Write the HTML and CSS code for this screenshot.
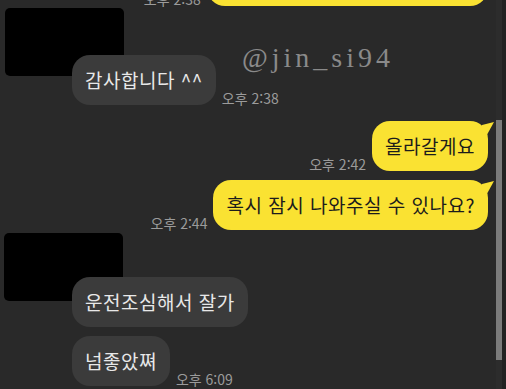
FILE: index.html
```html
<!DOCTYPE html>
<html lang="ko">
<head>
<meta charset="utf-8">
<link rel="stylesheet" href="styles.css">
</head>
<body>
<div class="screen">
  <div class="chat">
    <div class="msg sent first">
      <span class="time">오후 2:38</span>
      <div class="bubble yellow">네네 알겠습니다 감사합니다 ^^</div>
    </div>

    <div class="group g1">
      <div class="name"></div>
      <div class="redact"></div>
      <div class="msg recv">
        <div class="bubble gray">감사합니다 ^^</div>
        <span class="time">오후 2:38</span>
      </div>
    </div>

    <div class="msg sent s2">
      <span class="time">오후 2:42</span>
      <div class="bubble yellow">올라갈게요</div>
    </div>

    <div class="msg sent s3">
      <span class="time">오후 2:44</span>
      <div class="bubble yellow">혹시 잠시 나와주실 수 있나요?</div>
    </div>

    <div class="group g2">
      <div class="name"></div>
      <div class="redact"></div>
      <div class="msg recv">
        <div class="bubble gray">운전조심해서 잘가</div>
      </div>
      <div class="msg recv r2">
        <div class="bubble gray">넘좋았쪄</div>
        <span class="time">오후 6:09</span>
      </div>
    </div>
  </div>
  <div class="track"><div class="thumb"></div></div>
  <div class="watermark">@jin_si94</div>
</div>
</body>
</html>
```

FILE: styles.css
```css
html, body {
  margin: 0;
  padding: 0;
  background: #292929;
}
body {
  width: 506px;
  height: 389px;
  overflow: hidden;
  font-family: "Noto Sans CJK KR", "Noto Sans", sans-serif;
}
.screen {
  position: relative;
  display: flex;
  width: 506px;
  height: 389px;
  overflow: hidden;
}
.chat {
  flex: 1;
  display: flex;
  flex-direction: column;
  padding-right: 8px;
  overflow: hidden;
}
.msg {
  display: flex;
  align-items: flex-end;
  gap: 6px;
}
.sent {
  justify-content: flex-end;
}
.recv {
  justify-content: flex-start;
}
.first {
  margin-top: -44px;
}
.s2 {
  margin-top: 16px;
}
.s3 {
  margin-top: 9px;
}
.bubble {
  position: relative;
  box-sizing: border-box;
  height: 50px;
  padding: 0 13px;
  border-radius: 18px;
  font-size: 19px;
  letter-spacing: 0.5px;
  line-height: 50px;
  white-space: nowrap;
}
.yellow {
  background: #fae232;
  color: #1c1c1c;
}
.yellow::after {
  content: "";
  position: absolute;
  right: -6px;
  top: 1px;
  width: 12px;
  height: 12px;
  background: #fae232;
  clip-path: polygon(0 25%, 100% 0, 45% 100%, 0 100%);
}
.gray {
  background: #3b3b3b;
  color: #e8e8e8;
}
.time {
  font-size: 14px;
  line-height: 14px;
  color: #9b9b9b;
  white-space: nowrap;
}
.group {
  position: relative;
  padding-left: 72px;
  display: flex;
  flex-direction: column;
}
.g1 .name {
  height: 49px;
}
.g2 .name {
  height: 47px;
}
.r2 {
  margin-top: 9px;
}
.redact {
  position: absolute;
  left: 5px;
  top: 2px;
  width: 119px;
  height: 68px;
  background: #000;
  border-radius: 5px;
}
.g2 .redact {
  left: 4px;
  top: 3px;
}
.track {
  width: 10px;
  background: #2c2c2c;
  border-right: 4px solid #222;
  box-sizing: border-box;
}
.thumb {
  margin-top: 120px;
  width: 6px;
  height: 240px;
  background: #7b7b7b;
}
.watermark {
  position: absolute;
  left: 242px;
  top: 42px;
  font-family: "Liberation Serif", serif;
  font-size: 28px;
  letter-spacing: 4px;
  color: #8a8a8a;
}
```
